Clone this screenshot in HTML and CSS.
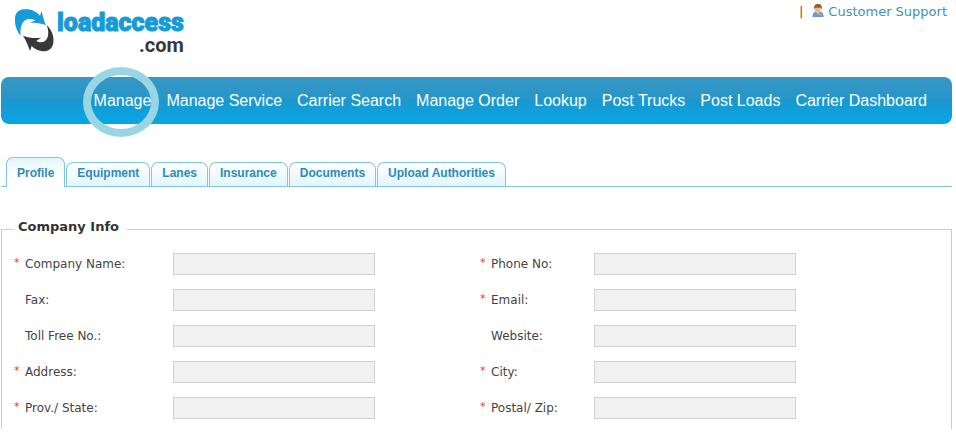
FILE: index.html
```html
<!DOCTYPE html>
<html lang="en">
<head>
<meta charset="utf-8">
<title>loadaccess.com</title>
<link rel="stylesheet" href="styles.css">
</head>
<body>
<header class="header">
  <a class="logo" href="#" aria-label="loadaccess.com home">
    <svg class="logo-mark" viewBox="45 27 120 132" aria-hidden="true">
      <path fill="#159bd7" d="M62 107C48 92 42 68 46 48C50 30 66 26 84 28C100 30 112 38 120 47L125 32C128 48 132 64 138 76C124 70 108 67 90 69L106 61C92 53 74 56 67 70C62 81 60 94 62 107Z"/>
      <path fill="#38383b" d="M140 75C154 88 163 108 160 128C157 148 142 156 124 153C110 151 102 145 95 138L90 153C84 136 78 120 69 107C84 113 106 116 124 113L109 122C120 130 136 128 142 114C147 102 145 88 140 75Z"/>
    </svg>
    <span class="logo-text">
      <span class="logo-name">loadaccess</span>
      <span class="logo-com">.com</span>
    </span>
  </a>
  <div class="support">
    <span class="divider">|</span>
    <svg class="person" viewBox="0 0 14 15" aria-hidden="true">
      <path fill="#6b96cf" d="M1 14c0-4 2-6 4-6h4c3 0 4 3 4 6z"/>
      <path fill="#f0c79d" d="M5 7h4v2l-2 2-2-2z"/>
      <rect x="4" y="2" width="6" height="7" rx="3" fill="#eab98c"/>
      <path fill="#9a5b2b" d="M3 6c-1-4 1-6 4-6s5 2 4 6l-1-2H4z"/>
      <path fill="#d8c28c" d="M8 11h3v1H8z"/>
    </svg>
    <a href="#">Customer Support</a>
  </div>
</header>

<nav class="nav" aria-label="Main">
  <a class="marked" href="#">Manage</a>
  <a href="#">Manage Service</a>
  <a href="#">Carrier Search</a>
  <a href="#">Manage Order</a>
  <a href="#">Lookup</a>
  <a href="#">Post Trucks</a>
  <a href="#">Post Loads</a>
  <a href="#">Carrier Dashboard</a>
</nav>

<main>
  <div class="tabs" role="tablist">
    <button class="tab active" type="button" role="tab" aria-selected="true">Profile</button>
    <button class="tab" type="button" role="tab">Equipment</button>
    <button class="tab" type="button" role="tab">Lanes</button>
    <button class="tab" type="button" role="tab">Insurance</button>
    <button class="tab" type="button" role="tab">Documents</button>
    <button class="tab" type="button" role="tab">Upload Authorities</button>
  </div>

  <form>
    <fieldset class="company">
      <legend>Company Info</legend>
      <div class="fields">
        <span class="req">*</span><label for="name">Company Name:</label><input id="name" type="text">
        <span class="req">*</span><label for="phone">Phone No:</label><input id="phone" type="text">
        <span class="req"></span><label for="fax">Fax:</label><input id="fax" type="text">
        <span class="req">*</span><label for="email">Email:</label><input id="email" type="text">
        <span class="req"></span><label for="tollfree">Toll Free No.:</label><input id="tollfree" type="text">
        <span class="req"></span><label for="website">Website:</label><input id="website" type="text">
        <span class="req">*</span><label for="address">Address:</label><input id="address" type="text">
        <span class="req">*</span><label for="city">City:</label><input id="city" type="text">
        <span class="req">*</span><label for="state">Prov./ State:</label><input id="state" type="text">
        <span class="req">*</span><label for="zip">Postal/ Zip:</label><input id="zip" type="text">
      </div>
    </fieldset>
  </form>
</main>
</body>
</html>
```
FILE: styles.css
```css
*,
*::after {
  box-sizing: border-box;
}

body {
  margin: 0;
  padding: 0 4px 0 1px;
  background: #fff;
  color: #444;
  font: 12px/16px "DejaVu Sans", Verdana, sans-serif;
}

a {
  text-decoration: none;
}

.header {
  display: flex;
  justify-content: space-between;
  align-items: flex-start;
  height: 77px;
  padding: 4px 5px 0 14px;
}

.logo {
  display: flex;
  gap: 2px;
  padding-top: 5px;
}

.logo-mark {
  width: 40px;
  height: 44px;
}

.logo-text {
  display: flex;
  flex-direction: column;
  font-family: Roboto, "Liberation Sans", sans-serif;
  font-weight: 900;
}

.logo-name {
  color: #159bd7;
  font-size: 25px;
  line-height: 28px;
  -webkit-text-stroke: 1px #159bd7;
}

.logo-com {
  align-self: flex-end;
  color: #38383b;
  font-size: 20px;
  font-weight: 700;
  line-height: 16px;
}

.support {
  display: flex;
  align-items: flex-start;
  font-size: 13px;
}

.support a {
  color: #3c93b8;
}

.divider {
  margin-right: 8px;
  color: #6b5a48;
}

.person {
  width: 14px;
  height: 14px;
  margin-right: 3px;
}

.nav {
  display: flex;
  justify-content: flex-end;
  align-items: center;
  gap: 15px;
  height: 47px;
  padding-right: 25px;
  border-radius: 8px;
  background: linear-gradient(#3797c3, #2596c9 49%, #1a97ce 50%, #0ba4e2 90%);
  font: 16px/20px "Liberation Sans", Arial, sans-serif;
}

.nav a {
  color: #fff;
  white-space: nowrap;
}

.marked {
  position: relative;
}

.marked::after {
  content: "";
  position: absolute;
  top: -24px;
  left: -11px;
  width: 76px;
  height: 70px;
  border: 8px solid #98d6e6;
  border-radius: 50%;
}

.tabs {
  display: flex;
  align-items: flex-end;
  gap: 1px;
  margin-top: 33px;
  padding-left: 5px;
  border-bottom: 1px solid #82c6da;
}

.tab {
  height: 24px;
  padding: 0 10px 4px;
  border: 1px solid #82c6da;
  border-bottom: 0;
  border-radius: 7px 7px 0 0;
  background: linear-gradient(#fff, #e2f6fc);
  color: #2c8bb9;
  font: bold 12px/18px "Liberation Sans", Arial, sans-serif;
}

.tab.active {
  height: 30px;
  margin-bottom: -1px;
  padding-bottom: 0;
  background: linear-gradient(#e2f6fc, #fff 60%);
}

.company {
  margin: 32px 0 0;
  padding: 0 12px 10px;
  border: 1px solid #ccc;
  border-bottom: 0;
}

legend {
  padding: 0 8px 4px 4px;
  color: #333;
  font-size: 13px;
  font-weight: bold;
}

.fields {
  display: grid;
  grid-template-columns: 11px 148px 307px 11px 103px 1fr;
  row-gap: 14px;
  align-items: center;
  padding-top: 14px;
}

.fields input {
  width: 202px;
  height: 22px;
  margin: 0;
  padding: 0 4px;
  border: 1px solid #d0d0d0;
  background: #f1f1f1;
  font: inherit;
}

.req {
  padding-bottom: 2px;
  color: #e0402f;
  font-size: 11px;
}
```
